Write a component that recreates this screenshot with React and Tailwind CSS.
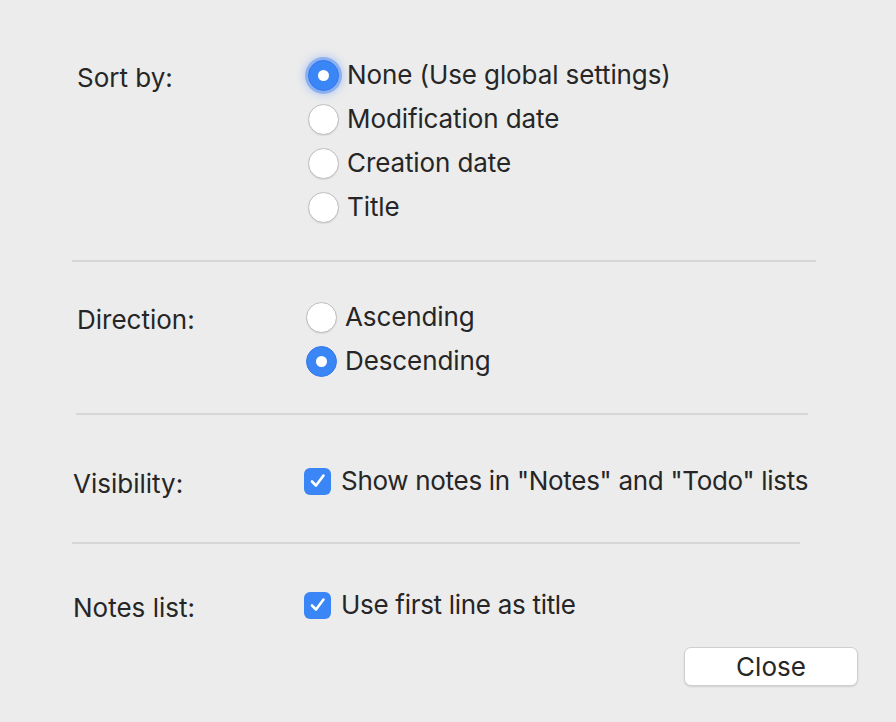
import React from "react";

const font = { fontFamily: "Inter, 'Liberation Sans', sans-serif" };

function Radio({ checked, focus, label }) {
  return (
    <div className="flex h-[44px] items-center">
      <div
        className={
          "flex h-[31px] w-[31px] shrink-0 items-center justify-center rounded-full " +
          (checked
            ? "bg-[#3b86f6] border border-[#3478e8]"
            : "bg-white border border-[#bdbdbd] shadow-[0_1px_1px_rgba(0,0,0,0.08)]") +
          (focus ? " shadow-[0_0_0_3px_rgba(80,140,245,0.5),0_0_8px_4px_rgba(80,140,245,0.35)]" : "")
        }
      >
        {checked && <div className="h-[11px] w-[11px] rounded-full bg-white" />}
      </div>
      <span className="ml-[8px] text-[26px] leading-none tracking-[-0.1px] text-[#262626]">{label}</span>
    </div>
  );
}

function Checkbox({ label }) {
  return (
    <div className="flex h-[44px] items-center">
      <div className="flex h-[27px] w-[27px] shrink-0 items-center justify-center rounded-[6px] bg-[#3b86f6]">
        <svg width="22" height="22" viewBox="0 0 22 22" fill="none">
          <path d="M5 11.5 L9 15.5 L16.5 5.5" stroke="white" strokeWidth="2.6" strokeLinecap="round" strokeLinejoin="round" />
        </svg>
      </div>
      <span className="ml-[10px] text-[26px] leading-none tracking-[-0.3px] text-[#262626]">{label}</span>
    </div>
  );
}

function Label({ children }) {
  return <div className="flex h-[44px] items-center pt-[5px] text-[26px] leading-none text-[#262626]">{children}</div>;
}

export default function App() {
  return (
    <div className="flex h-[722px] w-[896px] flex-col bg-[#ececec]" style={font}>
      {/* Sort by */}
      <div className="flex pt-[53px]">
        <div className="w-[308px] shrink-0 pl-[77px]">
          <Label>Sort by:</Label>
        </div>
        <div className="flex flex-col">
          <Radio checked focus label="None (Use global settings)" />
          <Radio label="Modification date" />
          <Radio label="Creation date" />
          <Radio label="Title" />
        </div>
      </div>
      <div className="ml-[72px] mt-[31px] h-[2px] w-[744px] bg-[#d6d6d6]" />

      {/* Direction */}
      <div className="flex pt-[33px]">
        <div className="w-[306px] shrink-0 pl-[77px]">
          <Label>Direction:</Label>
        </div>
        <div className="flex flex-col">
          <Radio label="Ascending" />
          <Radio checked label="Descending" />
        </div>
      </div>
      <div className="ml-[76px] mt-[30px] h-[2px] w-[732px] bg-[#d6d6d6]" />

      {/* Visibility */}
      <div className="flex pt-[44px]">
        <div className="w-[304px] shrink-0 pl-[73px]">
          <Label>Visibility:</Label>
        </div>
        <Checkbox label={'Show notes in "Notes" and "Todo" lists'} />
      </div>
      <div className="ml-[72px] mt-[39px] h-[2px] w-[728px] bg-[#d6d6d6]" />

      {/* Notes list */}
      <div className="flex pt-[39px]">
        <div className="w-[304px] shrink-0 pl-[73px]">
          <Label>Notes list:</Label>
        </div>
        <Checkbox label="Use first line as title" />
      </div>

      <div className="flex justify-end pr-[38px] pt-[20px]">
        <button className="flex h-[39px] w-[174px] items-center justify-center rounded-[7px] border border-[#cfcfcf] bg-white text-[26px] leading-none text-[#262626] shadow-[0_1px_2px_rgba(0,0,0,0.12)]">
          Close
        </button>
      </div>
    </div>
  );
}
